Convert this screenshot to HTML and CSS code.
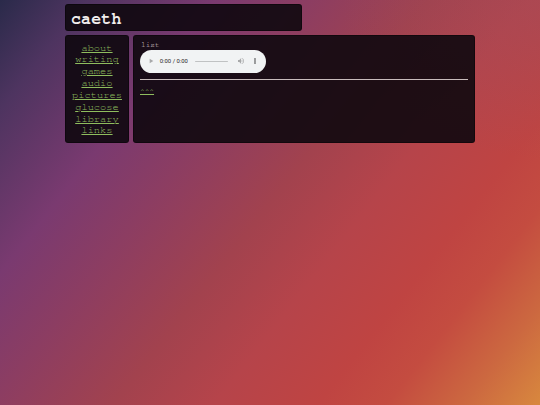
FILE: index.html
```html
<!DOCTYPE html>
<html>
<head>
<meta charset="utf-8">
<link rel="stylesheet" href="styles.css">
</head>
<body>
<div class="page">
  <header class="box title">caeth</header>
  <div class="row">
    <nav class="box nav">
      <a href="#">about</a>
      <a href="#">writing</a>
      <a href="#">games</a>
      <a href="#">audio</a>
      <a href="#">pictures</a>
      <a href="#">glucose</a>
      <a href="#">library</a>
      <a href="#">links</a>
    </nav>
    <main class="box main">
      <div class="label">list</div>
      <audio class="player" controls></audio>
      <hr class="rule">
      <a class="up" href="#">^^^</a>
    </main>
  </div>
</div>
</body>
</html>
```
FILE: styles.css
```css
html, body {
  margin: 0;
  padding: 0;
  height: 100%;
}
body {
  background:
    radial-gradient(ellipse 220px 160px at 560px 0px, rgba(150, 80, 100, 0.35), rgba(150, 80, 100, 0) 100%),
    linear-gradient(128deg, #2a2a4a 0%, #4e3460 10%, #7a3a70 25%, #8c3d62 36%, #a2424e 50%, #b6444a 62%, #bf4442 74%, #c44c40 82%, #cc6840 91%, #d8883e 100%);
  font-family: "Nimbus Mono PS", "FreeMono", "Courier New", "Liberation Mono", monospace;
  color: #d0cccc;
  overflow: hidden;
}
.page {
  width: 410px;
  margin: 0 auto;
  padding-top: 4px;
  display: flex;
  flex-direction: column;
  gap: 4px;
}
.box {
  background: rgba(14, 8, 14, 0.9);
  border: 1px solid rgba(0, 0, 0, 0.35);
  border-radius: 3px;
  box-sizing: border-box;
}
.title {
  width: 237px;
  height: 27px;
  padding: 4px 0 0 5px;
  font-size: 16.5px;
  font-weight: bold;
  color: #f2eeee;
  line-height: 20px;
  letter-spacing: 0.2px;
}
.row {
  display: flex;
  gap: 4px;
  align-items: stretch;
}
.nav {
  width: 64px;
  height: 108px;
  padding: 6.5px 0 0 0;
  display: flex;
  flex-direction: column;
  align-items: center;
}
.nav a {
  font-size: 10.4px;
  line-height: 11.85px;
  color: #8fbd5e;
  text-decoration: underline;
  text-underline-offset: 1px;
}
.main {
  flex: 1;
  padding: 5px 6px 0 6px;
  display: flex;
  flex-direction: column;
  align-items: flex-start;
}
.label {
  font-size: 7.8px;
  line-height: 9px;
  color: #e0dcdc;
  margin-left: 1px;
}
.player {
  zoom: 0.42;
  display: block;
  width: 300px;
  height: 54px;
  margin: 0;
}
.rule {
  align-self: stretch;
  margin: 6px 0 0 0;
  border: 0;
  height: 1px;
  background: #c8bcbc;
}
.up {
  margin-top: 7px;
  font-size: 7.8px;
  line-height: 9px;
  color: #8fbd5e;
  text-decoration: underline;
  text-underline-offset: 1px;
}
```
